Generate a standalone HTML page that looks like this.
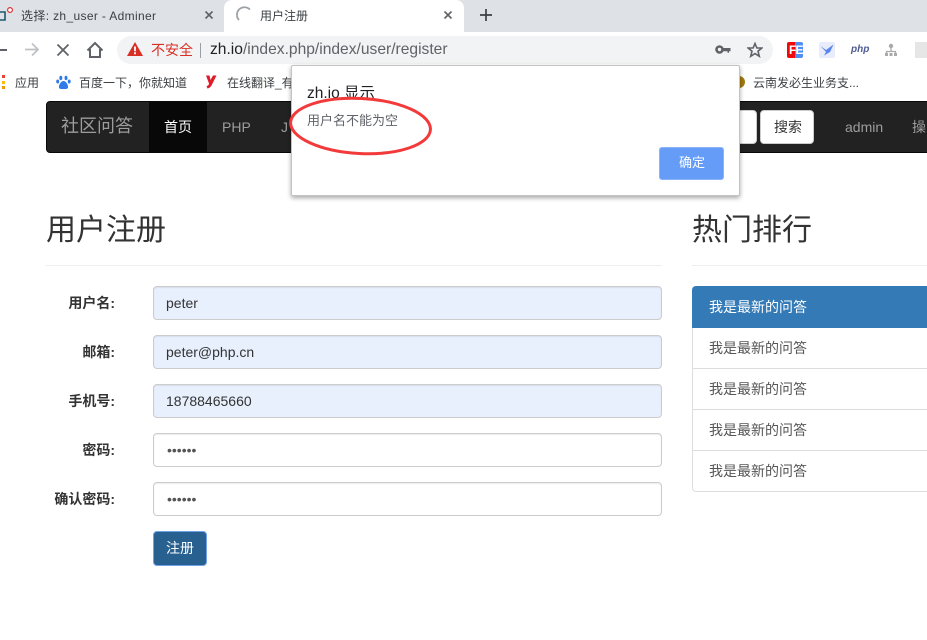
<!DOCTYPE html>
<html lang="zh"><head><meta charset="utf-8"><title>用户注册</title>
<style>
html,body{margin:0;padding:0;background:#fff}
#p{position:relative;width:927px;height:640px;overflow:hidden;background:#fff;font-family:"Liberation Sans","Noto Sans CJK SC",sans-serif;color:#333;font-size:14px}
.a,.t{position:absolute}
.t{white-space:nowrap;line-height:20px}
.b{font-weight:700}
.inp{position:absolute;left:153px;width:507px;height:32px;border:1px solid #ccc;border-radius:4px;background:#e8f0fe;box-shadow:inset 0 1px 1px rgba(0,0,0,.075)}
.inp.w{background:#fff}
.v{position:absolute;left:166px;white-space:nowrap;line-height:20px;font-size:14px;color:#333}
.l{position:absolute;right:812px;white-space:nowrap;font-weight:700;font-size:14px;line-height:20px;color:#333}
.li{position:absolute;left:692px;width:240px;height:40px;border:1px solid #ddd;border-top:0;box-sizing:content-box;background:#fff}
.lt{position:absolute;left:709px;font-size:14px;line-height:20px;color:#555;white-space:nowrap}
svg{position:absolute;display:block}
</style></head><body><div id="p">
<!-- tab strip -->
<div class="a" style="left:0;top:0;width:927px;height:32px;background:#dee1e6"></div>
<div class="a" style="left:224px;top:0;width:240px;height:32px;background:#fff;border-radius:8px 8px 0 0"></div>
<svg style="left:0;top:6px" width="14" height="16" viewBox="0 0 14 16"><path d="M-1 6H5V14H-1" fill="none" stroke="#1c5a6a" stroke-width="1.600"/><circle cx="10" cy="4" r="2.400" fill="#fff" stroke="#d33" stroke-width="1.200"/></svg>
<div class="t" style="left:21px;top:6px;font-size:12px;color:#3c4043;letter-spacing:.35px">选择: zh_user - Adminer</div>
<svg style="left:204px;top:10px" width="10" height="10" viewBox="0 0 10 10"><path d="M1.500 1.500L8.500 8.500M8.500 1.500L1.500 8.500" stroke="#5f6368" stroke-width="1.600"/></svg>
<svg style="left:235px;top:6px" width="18" height="18" viewBox="0 0 18 18"><path d="M15 3.600A7 7 0 1 0 4 14" fill="none" stroke="#9aa0a6" stroke-width="1.700"/></svg>
<div class="t" style="left:260px;top:6px;font-size:12px;color:#3c4043">用户注册</div>
<svg style="left:443px;top:10px" width="10" height="10" viewBox="0 0 10 10"><path d="M1.500 1.500L8.500 8.500M8.500 1.500L1.500 8.500" stroke="#5f6368" stroke-width="1.600"/></svg>
<svg style="left:479px;top:8px" width="14" height="14" viewBox="0 0 14 14"><path d="M7 1V13M1 7H13" stroke="#3c4043" stroke-width="1.700"/></svg>
<!-- toolbar -->
<div class="a" style="left:0;top:49px;width:7px;height:2px;background:#5f6368"></div>
<svg style="left:23px;top:41px" width="17" height="17" viewBox="0 0 17 17"><path d="M2 8.500H15M9 2.500L15 8.500L9 14.500" fill="none" stroke="#bdc1c6" stroke-width="1.700"/></svg>
<svg style="left:56px;top:43px" width="14" height="14" viewBox="0 0 14 14"><path d="M1.500 1.500L12.500 12.500M12.500 1.500L1.500 12.500" stroke="#5f6368" stroke-width="1.800"/></svg>
<svg style="left:86px;top:41px" width="18" height="18" viewBox="0 0 18 18"><path d="M1.500 9.500L9 2L16.500 9.500M4 8V16H14V8" fill="none" stroke="#5f6368" stroke-width="2"/></svg>
<div class="a" style="left:117px;top:36px;width:656px;height:28px;background:#f1f3f4;border-radius:14px"></div>
<svg style="left:127px;top:42px" width="16" height="14" viewBox="0 0 16 14"><path d="M8 0L16 14H0Z" fill="#d93025"/><path d="M8 4.500V9.300M8 10.300V12.300" stroke="#fff" stroke-width="1.800"/></svg>
<div class="t" style="left:151px;top:40px;font-size:14px;color:#d93025">不安全</div>
<div class="a" style="left:200px;top:43px;width:1px;height:15px;background:#9aa0a6"></div>
<div class="t" style="left:210px;top:40px;font-size:15.600px;color:#5f6368"><span style="color:#202124">zh.io</span>/index.php/index/user/register</div>
<svg style="left:715px;top:43px" width="16" height="14" viewBox="0 0 16 14"><circle cx="4.500" cy="6.500" r="3" fill="none" stroke="#5f6368" stroke-width="2.600"/><path d="M7 5H15.500V8.300H14V9.800H12.500V8.300H7Z" fill="#5f6368"/></svg>
<svg style="left:747px;top:42px" width="16" height="16" viewBox="0 0 16 16"><path d="M8 1.500L9.900 6H14.900L11 9.200L12.300 14.300L8 11.600L3.700 14.300L5 9.200L1.100 6H6.100Z" fill="none" stroke="#5f6368" stroke-width="1.600"/></svg>
<!-- extensions -->
<div class="a" style="left:787px;top:42px;width:16px;height:16px;border-radius:2px;background:linear-gradient(90deg,#ee0a0a 50%,#4f8ff5 50%)"></div>
<div class="t" style="left:789px;top:43px;font-size:12px;line-height:14px;font-weight:700;color:#fff;letter-spacing:-.8px">FE</div>
<div class="a" style="left:819px;top:42px;width:16px;height:16px;border-radius:2px;background:#e8ecfb"></div>
<svg style="left:820px;top:43px" width="14" height="14" viewBox="0 0 14 14"><path d="M0.500 3L6 7L13.500 1.500L10 9L4 12.500L6 9Z" fill="#5b86ee"/></svg>
<div class="t" style="left:851px;top:40px;font-size:10px;font-style:italic;font-weight:700;color:#4f5b93">php</div>
<svg style="left:885px;top:43px" width="12" height="14" viewBox="0 0 12 14"><circle cx="6" cy="3" r="2.200" fill="#aaa"/><path d="M6 5V9M1.500 11V8.500H10.500V11" fill="none" stroke="#aaa" stroke-width="1.300"/><rect x="0" y="10" width="3" height="3" fill="#aaa"/><rect x="4.500" y="10" width="3" height="3" fill="#aaa"/><rect x="9" y="10" width="3" height="3" fill="#aaa"/></svg>
<div class="a" style="left:915px;top:42px;width:12px;height:16px;background:#e6e6e6"></div>
<!-- bookmarks -->
<div class="a" style="left:2px;top:75px;width:3px;height:3px;background:#ea4335"></div>
<div class="a" style="left:2px;top:81px;width:3px;height:3px;background:#fbbc05"></div>
<div class="a" style="left:2px;top:86px;width:3px;height:3px;background:#f29900"></div>
<div class="t" style="left:15px;top:73px;font-size:12px;color:#3c4043">应用</div>
<svg style="left:56px;top:75px" width="15" height="15" viewBox="0 0 15 15"><g fill="#2f7bea"><ellipse cx="4.800" cy="3" rx="1.500" ry="2.200"/><ellipse cx="10" cy="3" rx="1.500" ry="2.200"/><ellipse cx="1.700" cy="6.500" rx="1.500" ry="2"/><ellipse cx="13.200" cy="6.500" rx="1.500" ry="2"/><path d="M7.500 6C5 6 2.500 10 3 12.500C3.500 14.500 6 14 7.500 14C9 14 11.500 14.500 12 12.500C12.500 10 10 6 7.500 6Z"/></g></svg>
<div class="t" style="left:79px;top:73px;font-size:12px;color:#3c4043">百度一下，你就知道</div>
<svg style="left:205px;top:75px" width="12" height="14" viewBox="0 0 12 14"><path d="M1 0.500H4.500L5.500 5L8 0.500H11.500L7.500 8.500C6.500 11 5 13 2.500 13.500L1.500 11C3 10.700 4 10 4 8.500Z" fill="#e01b2a"/></svg>
<div class="t" style="left:227px;top:73px;font-size:12px;color:#3c4043">在线翻译_有</div>
<div class="a" style="left:737px;top:76px;width:8px;height:12px;border-radius:0 6px 6px 0;background:#a07a10"></div>
<div class="t" style="left:753px;top:73px;font-size:12px;color:#3c4043">云南发必生业务支...</div>
<!-- navbar -->
<div class="a" style="left:46px;top:101px;width:900px;height:50px;background:#222;border:1px solid #080808;border-radius:4px"></div>
<div class="t" style="left:61px;top:115px;font-size:18px;line-height:22px;color:#9d9d9d">社区问答</div>
<div class="a" style="left:149px;top:102px;width:58px;height:50px;background:#080808"></div>
<div class="t" style="left:164px;top:117px;font-size:14px;color:#fff">首页</div>
<div class="t" style="left:222px;top:117px;color:#9d9d9d">PHP</div>
<div class="t" style="left:281px;top:117px;color:#9d9d9d">J</div>
<div class="a" style="left:700px;top:110px;width:55px;height:32px;background:#fff;border:1px solid #ccc;border-radius:4px"></div>
<div class="a" style="left:760px;top:110px;width:52px;height:32px;background:#fff;border:1px solid #ccc;border-radius:4px"></div>
<div class="t" style="left:774px;top:117px;font-size:14px;color:#333">搜索</div>
<div class="t" style="left:845px;top:117px;color:#9d9d9d">admin</div>
<div class="t" style="left:912px;top:117px;font-size:14px;color:#9d9d9d">操</div>
<!-- headings -->
<div class="t" style="left:46px;top:213px;font-size:30px;line-height:36px;color:#333">用户注册</div>
<div class="a" style="left:46px;top:265px;width:616px;height:1px;background:#eee"></div>
<div class="t" style="left:692px;top:213px;font-size:30px;line-height:36px;color:#333">热门排行</div>
<div class="a" style="left:692px;top:265px;width:235px;height:1px;background:#eee"></div>
<!-- form -->
<div class="l" style="top:293px">用户名:</div>
<div class="inp" style="top:286px"></div><div class="v" style="top:293px">peter</div>
<div class="l" style="top:342px">邮箱:</div>
<div class="inp" style="top:335px"></div><div class="v" style="top:342px">peter@php.cn</div>
<div class="l" style="top:391px">手机号:</div>
<div class="inp" style="top:384px"></div><div class="v" style="top:391px">18788465660</div>
<div class="l" style="top:440px">密码:</div>
<div class="inp w" style="top:433px"></div><div class="v" style="top:440px;left:167px;color:#555">••••••</div>
<div class="l" style="top:489px">确认密码:</div>
<div class="inp w" style="top:482px"></div><div class="v" style="top:489px;left:167px;color:#555">••••••</div>
<div class="a" style="left:153px;top:531px;width:52px;height:33px;background:#286090;border:1px solid #6fa0e8;border-radius:4px"></div>
<div class="t" style="left:166px;top:538px;font-size:14px;color:#fff">注册</div>
<!-- list -->
<div class="a" style="left:692px;top:286px;width:240px;height:42px;background:#337ab7;border-radius:4px 0 0 0"></div>
<div class="t" style="left:709px;top:297px;font-size:14px;color:#fff">我是最新的问答</div>
<div class="li" style="top:328px"></div><div class="lt" style="top:338px">我是最新的问答</div>
<div class="li" style="top:369px"></div><div class="lt" style="top:379px">我是最新的问答</div>
<div class="li" style="top:410px"></div><div class="lt" style="top:420px">我是最新的问答</div>
<div class="li" style="top:451px;border-radius:0 0 0 4px"></div><div class="lt" style="top:461px">我是最新的问答</div>
<!-- dialog -->
<div class="a" style="left:291px;top:65px;width:447px;height:129px;background:#fff;border:1px solid #c4c4c4;border-radius:2px;box-shadow:0 2px 5px rgba(0,0,0,.35)"></div>
<div class="t" style="left:307px;top:84px;font-size:15.500px;color:#202124">zh.io 显示</div>
<div class="t" style="left:307px;top:111px;font-size:13px;color:#5f6368">用户名不能为空</div>
<div class="a" style="left:659px;top:147px;width:63px;height:31px;background:#659cf7;border:1px solid #8ab4f8;border-radius:3px"></div>
<div class="t" style="left:679px;top:153px;font-size:13px;color:#fff">确定</div>
<!-- red circle -->
<svg style="left:285px;top:90px" width="155" height="72" viewBox="0 0 155 72"><ellipse cx="75.500" cy="36" rx="70" ry="27.500" transform="rotate(3 75.500 36)" fill="none" stroke="#f33a3a" stroke-width="3"/></svg>
</div></body></html>
